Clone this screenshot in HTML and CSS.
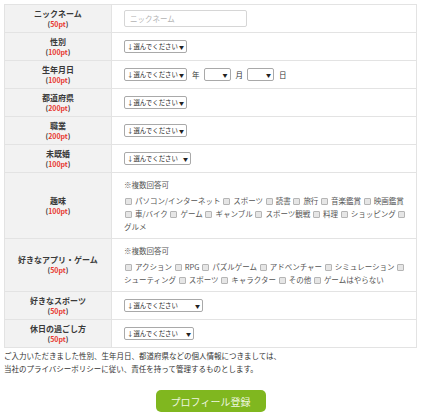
FILE: index.html
```html
<!DOCTYPE html>
<html lang="ja">
<head>
    <meta charset="UTF-8">
    <title>プロフィール</title>
    <link rel="stylesheet" href="styles.css">
</head>
<body>
<table class="prof">
    <colgroup><col class="c-head"><col></colgroup>
    <tr>
        <th>ニックネーム<span class="pt">(<em>50pt</em>)</span></th>
        <td><input class="txt" type="text" placeholder="ニックネーム"></td>
    </tr>
    <tr>
        <th>性別<span class="pt">(<em>100pt</em>)</span></th>
        <td><span class="sel w63"><select><option>↓選んでください</option></select></span></td>
    </tr>
    <tr>
        <th>生年月日<span class="pt">(<em>100pt</em>)</span></th>
        <td>
            <span class="sel w63"><select><option>↓選んでください</option></select></span><span class="unit">年</span><span class="sel w27"><select><option></option></select></span><span class="unit">月</span><span class="sel w27"><select><option></option></select></span><span class="unit">日</span>
        </td>
    </tr>
    <tr>
        <th>都道府県<span class="pt">(<em>200pt</em>)</span></th>
        <td><span class="sel w63"><select><option>↓選んでください</option></select></span></td>
    </tr>
    <tr>
        <th>職業<span class="pt">(<em>200pt</em>)</span></th>
        <td><span class="sel w63"><select><option>↓選んでください</option></select></span></td>
    </tr>
    <tr>
        <th>未既婚<span class="pt">(<em>100pt</em>)</span></th>
        <td><span class="sel w67"><select><option>↓選んでください</option></select></span></td>
    </tr>
    <tr class="multi">
        <th>趣味<span class="pt">(<em>100pt</em>)</span></th>
        <td>
            <p class="note">※複数回答可</p>
            <div class="chks">
                <label><input type="checkbox">パソコン/インターネット</label>
                <label><input type="checkbox">スポーツ</label>
                <label><input type="checkbox">読書</label>
                <label><input type="checkbox">旅行</label>
                <label><input type="checkbox">音楽鑑賞</label>
                <label><input type="checkbox">映画鑑賞</label>
                <label><input type="checkbox">車/バイク</label>
                <label><input type="checkbox">ゲーム</label>
                <label><input type="checkbox">ギャンブル</label>
                <label><input type="checkbox">スポーツ観戦</label>
                <label><input type="checkbox">料理</label>
                <label><input type="checkbox">ショッピング</label>
                <label><input type="checkbox">グルメ</label>
            </div>
        </td>
    </tr>
    <tr class="multi">
        <th>好きなアプリ・ゲーム<span class="pt">(<em>50pt</em>)</span></th>
        <td>
            <p class="note">※複数回答可</p>
            <div class="chks">
                <label><input type="checkbox">アクション</label>
                <label><input type="checkbox">RPG</label>
                <label><input type="checkbox">パズルゲーム</label>
                <label><input type="checkbox">アドベンチャー</label>
                <label><input type="checkbox">シミュレーション</label>
                <label><input type="checkbox">シューティング</label>
                <label><input type="checkbox">スポーツ</label>
                <label><input type="checkbox">キャラクター</label>
                <label><input type="checkbox">その他</label>
                <label><input type="checkbox">ゲームはやらない</label>
            </div>
        </td>
    </tr>
    <tr>
        <th>好きなスポーツ<span class="pt">(<em>50pt</em>)</span></th>
        <td><span class="sel w79"><select><option>↓選んでください</option></select></span></td>
    </tr>
    <tr>
        <th>休日の過ごし方<span class="pt">(<em>50pt</em>)</span></th>
        <td><span class="sel w70"><select><option>↓選んでください</option></select></span></td>
    </tr>
</table>

<p class="notice">ご入力いただきました性別、生年月日、都道府県などの個人情報につきましては、<br>当社のプライバシーポリシーに従い、責任を持って管理するものとします。</p>

<div class="submit">
    <button type="button">プロフィール登録</button>
</div>
</body>
</html>
```

FILE: styles.css
```css
body{ margin: 4px; color: #333; background: #fff;
    font-family: "Noto Sans CJK JP", "Liberation Sans", sans-serif; font-size: 7.5px;}
p{ margin: 0;}

.prof{ width: 100%; border-collapse: collapse; table-layout: fixed;}
.prof .c-head{ width: 107px;}
.prof th, .prof td{ border: 1px solid #e3e3e3; height: 27px; padding: 0 12px; vertical-align: middle;}
.prof th{ background: #f2f2f2; font-size: 8px; font-weight: bold; line-height: 10px; text-align: center; color: #3a3a3a;}
.prof td{ background: #fff; text-align: left;}
.pt{ display: block; font-size: 7px;}
.pt em{ font-style: normal; color: #e8372f;}

.txt{ box-sizing: border-box; width: 123px; height: 17px; margin: 0; padding: 0 5px;
    border: 1px solid #d6d6d6; border-radius: 2px; font: inherit; color: #333; outline: none;}
.txt::placeholder{ color: #b3b3b3;}

.sel{ position: relative; display: inline-block; vertical-align: middle;}
.sel select{ -webkit-appearance: none; appearance: none; box-sizing: border-box; width: 100%; height: 13px;
    margin: 0; padding: 0 7px 0 2px; border: 1px solid #a9a9a9; border-radius: 2px; background: #fff;
    font-family: inherit; font-size: 6.4px; line-height: 11px; color: #222; display: block;}
.sel:after{ content: "▼"; position: absolute; right: 3px; top: 3px; font-size: 5px; line-height: 7px; color: #222; pointer-events: none;}
.w27{ width: 27px;}
.w63{ width: 63px;}
.w67{ width: 67px;}
.w70{ width: 70px;}
.w79{ width: 79px;}
.unit{ display: inline-block; vertical-align: middle; margin: 0 4px 0 5px;}

.multi td{ padding: 5px 5px 5px 12px;}
.note{ line-height: 13px; color: #555; margin-bottom: 3px;}
.chks{ line-height: 13px; color: #555;}
.chks input{ -webkit-appearance: none; appearance: none; width: 7px; height: 7px; margin: 0 3px 0 1px;
    border: 1px solid #b5b5b5; border-radius: 1px; background: #e6e6e6; vertical-align: -1px;}

.notice{ margin-top: 2px; line-height: 12.5px; color: #333;}

.submit{ text-align: center; margin-top: 15px;}
.submit button{ width: 110px; height: 22px; border: 0; border-radius: 5px; background: #80b71f;
    color: #eef6e0; font-family: inherit; font-size: 10px; cursor: pointer; padding: 0;}
```
